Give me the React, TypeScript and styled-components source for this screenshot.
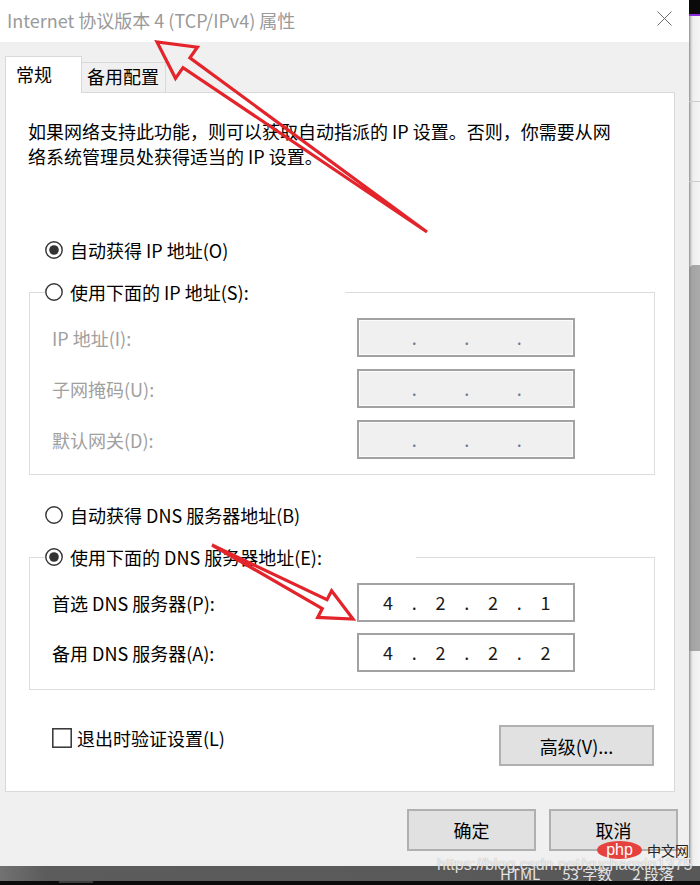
import React from "react";
import styled, { createGlobalStyle } from "styled-components";

const GlobalStyle = createGlobalStyle`
  html, body { margin: 0; padding: 0; }
  body {
    width: 700px;
    height: 885px;
    overflow: hidden;
    background: #f0f0f0;
    font-family: "Noto Sans CJK SC", "Microsoft YaHei", sans-serif;
    color: #000;
  }
`;

const Page = styled.div`
  position: relative;
  width: 700px;
  height: 885px;
  display: flex;
  flex-direction: column;
  overflow: hidden;
`;

const Main = styled.div`
  display: flex;
  height: 866px;
`;

const Dialog = styled.div`
  width: 689px;
  display: flex;
  flex-direction: column;
  background: #f0f0f0;
`;

const TitleBar = styled.div`
  box-sizing: border-box;
  height: 42px;
  background: #fff;
  display: flex;
  align-items: flex-start;
  justify-content: space-between;
  padding: 7px 17px 0 7px;
`;

const Title = styled.span`
  font-size: 18px;
  line-height: 26px;
  color: #9a9a9a;
  white-space: nowrap;
`;

const CloseIcon = styled.svg`
  margin-top: 4px;
  width: 15px;
  height: 15px;
`;

const Body = styled.div`
  flex: 1;
  display: flex;
  flex-direction: column;
  padding: 14px 11px 0 5px;
`;

const TabStrip = styled.div`
  display: flex;
  align-items: flex-end;
  height: 36px;
`;

const Tab = styled.div<{ $active?: boolean }>`
  box-sizing: border-box;
  position: relative;
  z-index: ${(p) => (p.$active ? 1 : 0)};
  height: ${(p) => (p.$active ? 37 : 30)}px;
  width: ${(p) => (p.$active ? 77 : 84)}px;
  margin-bottom: ${(p) => (p.$active ? -1 : 0)}px;
  background: ${(p) => (p.$active ? "#fff" : "#f0f0f0")};
  border: 1px solid #d9d9d9;
  border-bottom: none;
  border-left-width: ${(p) => (p.$active ? 1 : 0)}px;
  padding: ${(p) => (p.$active ? "0 0 2px 10px" : "0 0 4px 5px")};
  display: flex;
  align-items: center;
  font-size: 18px;
  line-height: 26px;
  color: #000;
`;

const Panel = styled.div`
  box-sizing: border-box;
  width: 670px;
  height: 700px;
  background: #fff;
  border: 1px solid #d9d9d9;
  padding: 26px 20px 0 23px;
  display: flex;
  flex-direction: column;
`;

const Description = styled.p`
  margin: 0 0 0 -1px;
  font-size: 18px;
  line-height: 25px;
  white-space: nowrap;
`;

const RadioRow = styled.label<{ $mt?: number; $ml?: number }>`
  display: flex;
  align-items: center;
  gap: 7px;
  height: 26px;
  margin-top: ${(p) => p.$mt ?? 0}px;
  margin-left: ${(p) => p.$ml ?? 0}px;
  font-size: 18px;
  line-height: 26px;
  white-space: nowrap;
`;

const MarkSvg = styled.svg`
  flex: none;
  display: block;
`;

const GroupBox = styled.fieldset<{ $mt: number }>`
  box-sizing: border-box;
  width: 626px;
  min-width: 0;
  margin: ${(p) => p.$mt}px 0 0 0;
  padding: 0;
  border: 1px solid #dcdcdc;
`;

const GroupLegend = styled.legend<{ $w: number }>`
  box-sizing: border-box;
  width: ${(p) => p.$w}px;
  margin-left: 15px;
  padding: 0;
`;

const GroupContent = styled.div<{ $gap: number; $pb: number }>`
  display: flex;
  flex-direction: column;
  gap: ${(p) => p.$gap}px;
  padding: 13px 0 ${(p) => p.$pb}px 22px;
`;

const FieldRow = styled.div`
  display: flex;
  align-items: center;
  height: 39px;
`;

const FieldLabel = styled.span<{ $disabled?: boolean }>`
  width: 305px;
  font-size: 18px;
  line-height: 26px;
  color: ${(p) => (p.$disabled ? "#a0a0a0" : "#000")};
  white-space: nowrap;
`;

const IpField = styled.div<{ $disabled?: boolean }>`
  box-sizing: border-box;
  width: 218px;
  height: 39px;
  border: 2px solid #a2a2a2;
  background: ${(p) => (p.$disabled ? "#f0f0f0" : "#fff")};
  box-shadow: ${(p) => (p.$disabled ? "inset 0 0 0 1px #fbfbfb" : "none")};
  display: grid;
  grid-template-columns: 40px 12.5px 40px 12.5px 40px 12.5px 40px;
  align-items: center;
  padding: 0 0 1px 9px;
  font-size: 18px;
  line-height: 26px;
  color: ${(p) => (p.$disabled ? "#6a7a90" : "#1a1a1a")};
`;

const Octet = styled.span`
  text-align: center;
`;

const Sep = styled.span`
  text-align: center;
`;

const BottomRow = styled.div`
  display: flex;
  justify-content: space-between;
  align-items: flex-start;
  width: 625px;
  margin-top: 35px;
`;

const CheckRow = styled.label`
  display: flex;
  align-items: center;
  gap: 5px;
  height: 26px;
  margin-left: 23px;
  font-size: 18px;
  line-height: 26px;
  white-space: nowrap;
`;

const Button = styled.div<{ $w: number; $h: number }>`
  box-sizing: border-box;
  width: ${(p) => p.$w}px;
  height: ${(p) => p.$h}px;
  background: #e1e1e1;
  border: 2px solid #b0b0b0;
  display: flex;
  align-items: center;
  justify-content: center;
  font-size: 18px;
  line-height: 26px;
  color: #000;
`;

const DialogButtons = styled.div`
  display: flex;
  justify-content: flex-end;
  gap: 13px;
  margin-top: 17px;
`;

const SideStrip = styled.div`
  width: 11px;
  display: flex;
  flex-direction: column;
  background: linear-gradient(to right, #8e8e8e 0, #d2d2d2 2px, #eeeeee 4px, #f5f5f5 100%);
`;

const StripTop = styled.div`
  height: 14px;
  background: #0a0a0a;
`;

const StripAccent = styled.div`
  height: 2px;
  background: #8a2be2;
`;

const StripPane = styled.div<{ $h: number }>`
  height: ${(p) => p.$h}px;
  border-bottom: 1px solid #cdcdcd;
`;

const StripThumb = styled.div`
  margin-top: 83px;
  height: 386px;
  background: linear-gradient(to right, #8a8a8a 0, #a3a3a3 3px, #ababab 100%);
  border-radius: 5px 0 0 0;
`;

const StatusBar = styled.div`
  height: 19px;
  display: flex;
  flex-direction: column;
`;

const StatusMain = styled.div`
  height: 15px;
  background: linear-gradient(to right, #727272 0, #5c5c5c 45px, #585858 100%);
  display: flex;
  align-items: center;
  font-size: 15px;
  line-height: 15px;
  color: #e4e4e4;
  white-space: nowrap;
`;

const StatusItem = styled.span<{ $ml: number }>`
  margin-left: ${(p) => p.$ml}px;
`;

const StatusFoot = styled.div`
  height: 4px;
  background: #0b0b0b;
  padding-left: 59px;
`;

const FootTab = styled.div`
  width: 34px;
  height: 2px;
  background: #3e3e3e;
`;

const Watermark = styled.div`
  position: absolute;
  left: 437px;
  top: 856px;
  font-family: "Liberation Sans", Arial, sans-serif;
  font-size: 16px;
  line-height: 18px;
  color: rgba(255, 255, 255, 0.82);
  text-shadow: 0 0 1px rgba(70, 70, 70, 0.55);
  white-space: nowrap;
  z-index: 5;
`;

const PhpLogo = styled.div`
  position: absolute;
  left: 597px;
  top: 841px;
  display: flex;
  align-items: center;
  gap: 5px;
  z-index: 6;
`;

const PhpOval = styled.span`
  width: 45px;
  height: 18px;
  border-radius: 50%;
  background: #e5413d;
  color: #fff;
  font-family: "Liberation Sans", Arial, sans-serif;
  font-size: 16px;
  line-height: 17px;
  text-align: center;
`;

const PhpText = styled.span`
  font-size: 14px;
  line-height: 18px;
  color: #222;
`;

const ArrowLayer = styled.svg`
  position: absolute;
  left: 0;
  top: 0;
  width: 700px;
  height: 885px;
  pointer-events: none;
  z-index: 10;
`;

function arrowPoints(
  tail: [number, number],
  tip: [number, number],
  h: number,
  H: number,
  w: number
): string {
  const dx = tip[0] - tail[0];
  const dy = tip[1] - tail[1];
  const L = Math.hypot(dx, dy);
  const ux = dx / L;
  const uy = dy / L;
  const nx = -uy;
  const ny = ux;
  const bx = tip[0] - ux * h;
  const by = tip[1] - uy * h;
  const pts: [number, number][] = [
    tail,
    [bx + nx * w, by + ny * w],
    [bx + nx * H, by + ny * H],
    tip,
    [bx - nx * H, by - ny * H],
    [bx - nx * w, by - ny * w],
  ];
  return pts.map((p) => `${p[0].toFixed(1)},${p[1].toFixed(1)}`).join(" ");
}

const Radio = ({ checked }: { checked?: boolean }) => (
  <MarkSvg width="18" height="18" viewBox="0 0 18 18">
    <circle cx="9" cy="9" r="8.2" fill="#fff" stroke="#333" strokeWidth="1.4" />
    {checked && <circle cx="9" cy="9" r="4.8" fill="#333" />}
  </MarkSvg>
);

const CheckBox = () => (
  <MarkSvg width="20" height="20" viewBox="0 0 20 20">
    <rect x="0.8" y="0.8" width="18.4" height="18.4" fill="#fff" stroke="#333" strokeWidth="1.5" />
  </MarkSvg>
);

const Address = ({ parts, disabled }: { parts: string[]; disabled?: boolean }) => (
  <IpField $disabled={disabled}>
    <Octet>{parts[0]}</Octet>
    <Sep>.</Sep>
    <Octet>{parts[1]}</Octet>
    <Sep>.</Sep>
    <Octet>{parts[2]}</Octet>
    <Sep>.</Sep>
    <Octet>{parts[3]}</Octet>
  </IpField>
);

export default function App() {
  return (
    <>
      <GlobalStyle />
      <Page>
        <Main>
          <Dialog>
            <TitleBar>
              <Title>Internet 协议版本 4 (TCP/IPv4) 属性</Title>
              <CloseIcon viewBox="0 0 15 15">
                <path d="M0.5 0.5 L14.5 14.5 M14.5 0.5 L0.5 14.5" stroke="#6b6b6b" strokeWidth="1" fill="none" />
              </CloseIcon>
            </TitleBar>
            <Body>
              <TabStrip>
                <Tab $active>常规</Tab>
                <Tab>备用配置</Tab>
              </TabStrip>
              <Panel>
                <Description>
                  如果网络支持此功能，则可以获取自动指派的 IP 设置。否则，你需要从网
                  <br />
                  络系统管理员处获得适当的 IP 设置。
                </Description>

                <RadioRow $mt={68} $ml={16}>
                  <Radio checked />
                  自动获得 IP 地址(O)
                </RadioRow>

                <GroupBox $mt={16}>
                  <GroupLegend $w={300}>
                    <RadioRow>
                      <Radio />
                      使用下面的 IP 地址(S):
                    </RadioRow>
                  </GroupLegend>
                  <GroupContent $gap={12} $pb={15}>
                    <FieldRow>
                      <FieldLabel $disabled>IP 地址(I):</FieldLabel>
                      <Address parts={["", "", "", ""]} disabled />
                    </FieldRow>
                    <FieldRow>
                      <FieldLabel $disabled>子网掩码(U):</FieldLabel>
                      <Address parts={["", "", "", ""]} disabled />
                    </FieldRow>
                    <FieldRow>
                      <FieldLabel $disabled>默认网关(D):</FieldLabel>
                      <Address parts={["", "", "", ""]} disabled />
                    </FieldRow>
                  </GroupContent>
                </GroupBox>

                <RadioRow $mt={27} $ml={16}>
                  <Radio />
                  自动获得 DNS 服务器地址(B)
                </RadioRow>

                <GroupBox $mt={16}>
                  <GroupLegend $w={371}>
                    <RadioRow>
                      <Radio checked />
                      使用下面的 DNS 服务器地址(E):
                    </RadioRow>
                  </GroupLegend>
                  <GroupContent $gap={11} $pb={17}>
                    <FieldRow>
                      <FieldLabel>首选 DNS 服务器(P):</FieldLabel>
                      <Address parts={["4", "2", "2", "1"]} />
                    </FieldRow>
                    <FieldRow>
                      <FieldLabel>备用 DNS 服务器(A):</FieldLabel>
                      <Address parts={["4", "2", "2", "2"]} />
                    </FieldRow>
                  </GroupContent>
                </GroupBox>

                <BottomRow>
                  <CheckRow>
                    <CheckBox />
                    退出时验证设置(L)
                  </CheckRow>
                  <Button $w={155} $h={41}>高级(V)...</Button>
                </BottomRow>
              </Panel>
              <DialogButtons>
                <Button $w={129} $h={42}>确定</Button>
                <Button $w={129} $h={42}>取消</Button>
              </DialogButtons>
            </Body>
          </Dialog>
          <SideStrip>
            <StripTop />
            <StripAccent />
            <StripPane $h={85} />
            <StripPane $h={79} />
            <StripThumb />
          </SideStrip>
        </Main>
        <StatusBar>
          <StatusMain>
            <StatusItem $ml={500}>HTML</StatusItem>
            <StatusItem $ml={22}>53 字数</StatusItem>
            <StatusItem $ml={20}>2 段落</StatusItem>
          </StatusMain>
          <StatusFoot>
            <FootTab />
          </StatusFoot>
        </StatusBar>

        <PhpLogo>
          <PhpOval>php</PhpOval>
          <PhpText>中文网</PhpText>
        </PhpLogo>
        <Watermark>https://blog.csdn.net/xuchaoxin1375</Watermark>

        <ArrowLayer viewBox="0 0 700 885">
          <polygon
            points={arrowPoints([427, 232], [157, 42], 36, 19, 6)}
            fill="none"
            stroke="#e3242b"
            strokeWidth="3.2"
            strokeLinejoin="miter"
          />
          <polygon
            points={arrowPoints([212, 545], [353, 619], 32, 15, 5)}
            fill="none"
            stroke="#e3242b"
            strokeWidth="3.2"
            strokeLinejoin="miter"
          />
        </ArrowLayer>
      </Page>
    </>
  );
}
